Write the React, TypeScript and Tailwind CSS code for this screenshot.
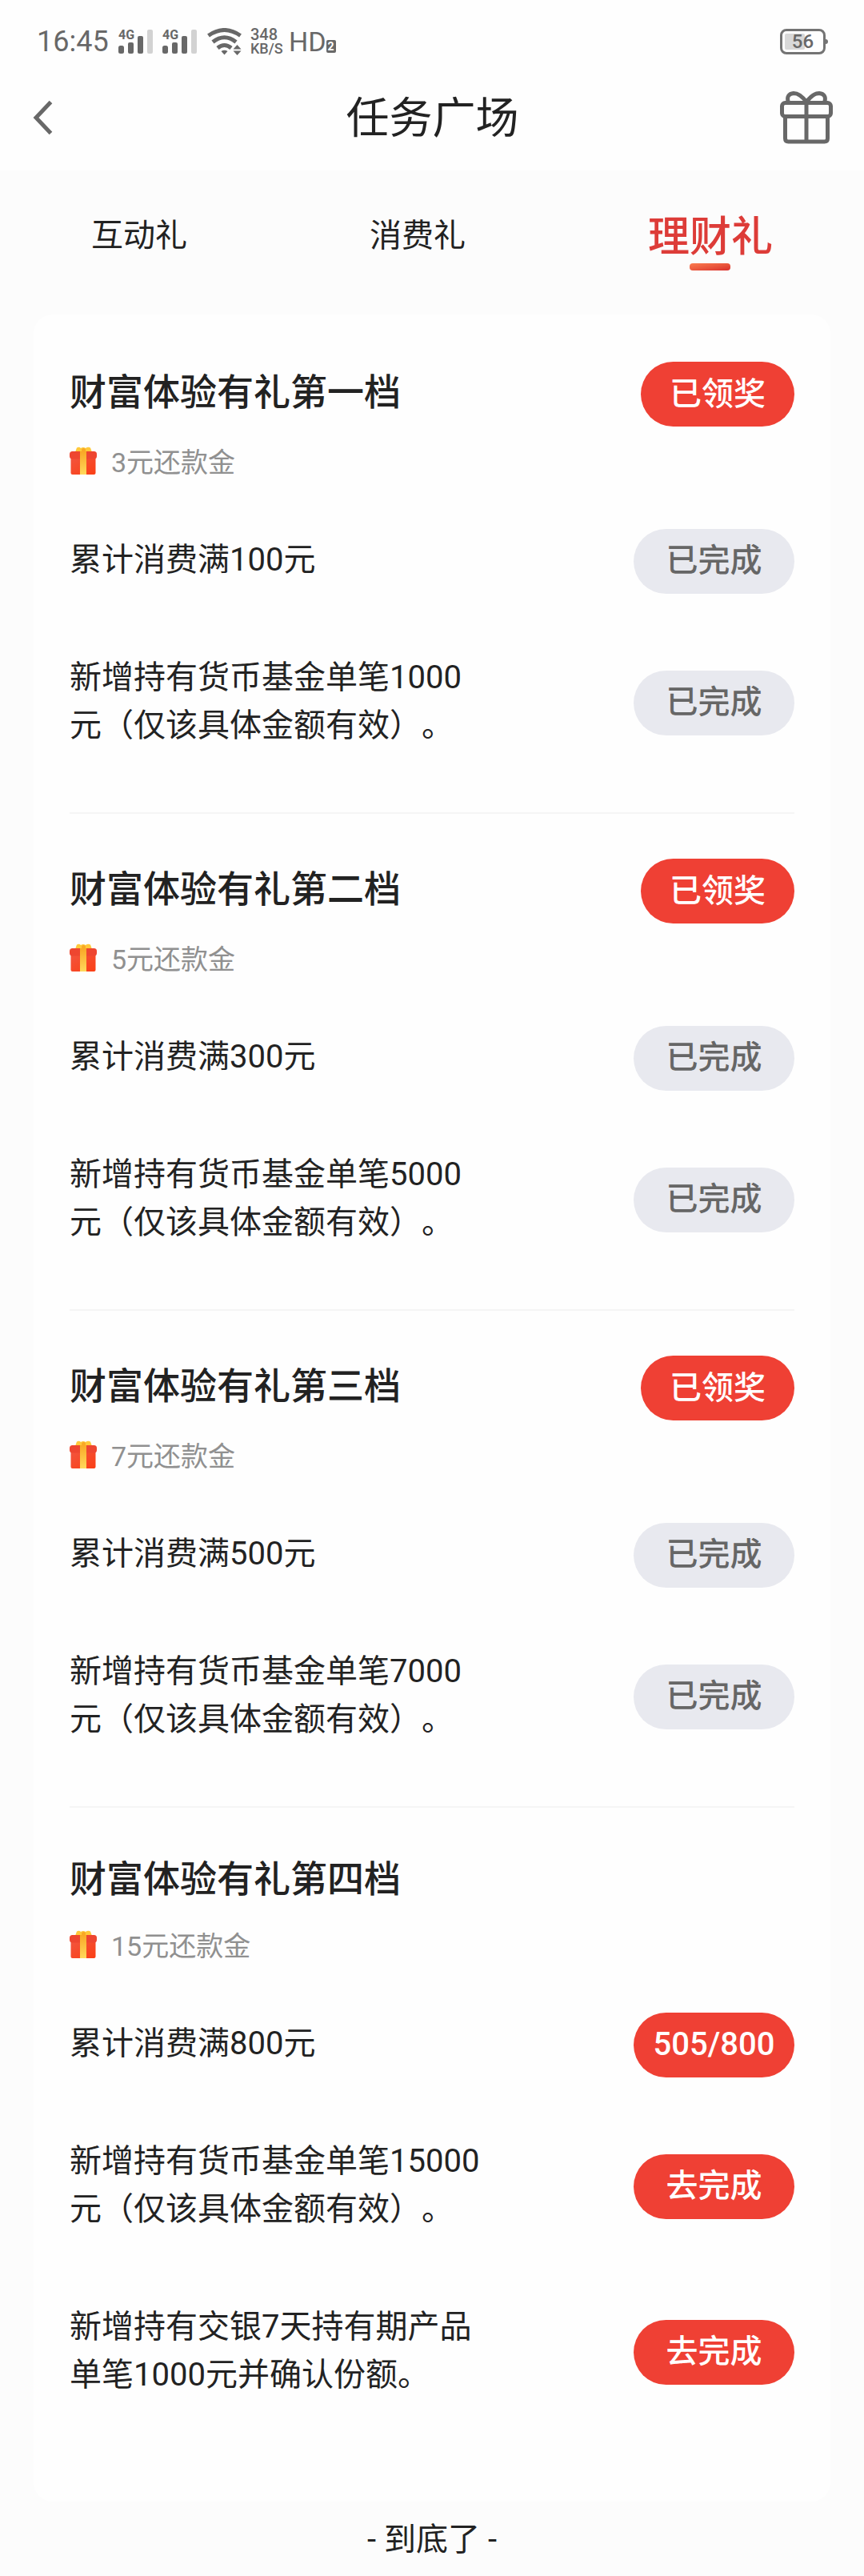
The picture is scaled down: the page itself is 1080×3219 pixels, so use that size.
'use client';

import { useState } from 'react';
import clsx from 'clsx';

type Status = 'done' | 'todo';

type Task = {
  text: string;
  action: string;
  status: Status;
};

type Level = {
  title: string;
  reward: string;
  claimed?: boolean;
  tasks: Task[];
};

const TABS = ['互动礼', '消费礼', '理财礼'];

const LEVELS: Level[] = [
  {
    title: '财富体验有礼第一档',
    reward: '3元还款金',
    claimed: true,
    tasks: [
      { text: '累计消费满100元', action: '已完成', status: 'done' },
      { text: '新增持有货币基金单笔1000元（仅该具体金额有效）。', action: '已完成', status: 'done' },
    ],
  },
  {
    title: '财富体验有礼第二档',
    reward: '5元还款金',
    claimed: true,
    tasks: [
      { text: '累计消费满300元', action: '已完成', status: 'done' },
      { text: '新增持有货币基金单笔5000元（仅该具体金额有效）。', action: '已完成', status: 'done' },
    ],
  },
  {
    title: '财富体验有礼第三档',
    reward: '7元还款金',
    claimed: true,
    tasks: [
      { text: '累计消费满500元', action: '已完成', status: 'done' },
      { text: '新增持有货币基金单笔7000元（仅该具体金额有效）。', action: '已完成', status: 'done' },
    ],
  },
  {
    title: '财富体验有礼第四档',
    reward: '15元还款金',
    tasks: [
      { text: '累计消费满800元', action: '505/800', status: 'todo' },
      { text: '新增持有货币基金单笔15000元（仅该具体金额有效）。', action: '去完成', status: 'todo' },
      { text: '新增持有交银7天持有期产品单笔1000元并确认份额。', action: '去完成', status: 'todo' },
    ],
  },
];

function Signal() {
  return (
    <div className="relative h-8 w-11">
      <span className="absolute left-0 top-0 text-base leading-4 font-bold">4G</span>
      <svg viewBox="0 0 44 32" className="h-8 w-11" fill="#686868">
        <rect x="0" y="21" width="7" height="10" rx="2.5" />
        <rect x="12" y="17" width="7" height="14" rx="2" />
        <rect x="24" y="9" width="7" height="22" rx="2" />
        <rect x="36" y="1" width="7" height="30" rx="2" fill="#d2d2d2" />
      </svg>
    </div>
  );
}

function Wifi() {
  return (
    <svg viewBox="0 0 44 34" className="h-[34px] w-11" fill="none" stroke="#686868" strokeWidth="5">
      <path d="M1.5 9.5 Q21.5 -4.5 41.5 9.5" />
      <path d="M7 17.5 Q21.5 6 36 17.5" />
      <path d="M13 25 Q21.5 18 30 25" />
      <path d="M17.5 29 Q21.5 26.5 25.5 29 L21.5 33.5 Z" fill="#686868" stroke="none" />
      <path d="M32.5 26.5 L37.5 21 L42.5 26.5 Z M32.5 28.5 L37.5 34 L42.5 28.5 Z" fill="#686868" stroke="none" />
    </svg>
  );
}

function StatusBar() {
  return (
    <div className="flex h-20 items-center justify-between pt-6 pl-[46px] pr-[45px] text-[#686868]">
      <div className="flex items-center">
        <span className="w-[102px] text-4xl leading-8">16:45</span>
        <div className="flex gap-[11px]">
          <Signal />
          <Signal />
        </div>
        <div className="ml-3">
          <Wifi />
        </div>
        <div className="ml-2.5 flex w-12 flex-col font-medium">
          <span className="text-xl leading-[18px]">348</span>
          <span className="text-lg leading-[18px]">KB/S</span>
        </div>
        <span className="text-[34px] leading-8">HD</span>
        <span className="mt-3 h-4 w-3 rounded-xs bg-[#686868] text-center text-sm leading-4 font-bold text-white">2</span>
      </div>

      {/* battery */}
      <div className="flex items-center">
        <div className="relative flex h-8 w-[57px] items-center justify-center rounded-lg border-3 border-[#747474]">
          <div className="absolute left-[3px] top-[3px] h-5 w-[25px] rounded-xs bg-[#d8d8d8]" />
          <span className="relative text-2xl leading-6 font-medium">56</span>
        </div>
        <div className="h-1.5 w-[3px] rounded-r-full bg-[#747474]" />
      </div>
    </div>
  );
}

function GiftOutline() {
  return (
    <svg viewBox="0 0 66 66" className="size-[66px]" fill="none" stroke="#686868" strokeWidth="5">
      <rect x="2.5" y="14.5" width="61" height="17" rx="4" />
      <path d="M6.5 32 V59 Q6.5 63 10.5 63 H55.5 Q59.5 63 59.5 59 V32" />
      <path d="M33 13 V63" />
      <path d="M10.5 14 C8 7 11 3 17 2.5 C23 2.5 29 8 33 13.5 C37 8 43 2.5 49 2.5 C55 3 58 7 55.5 14" />
    </svg>
  );
}

function GiftIcon() {
  return (
    <svg viewBox="0 0 34 36" className="mb-1 h-9 w-[34px]">
      <defs>
        <linearGradient id="box" x1="0" y1="0" x2="1" y2="1">
          <stop offset="0" stopColor="#f2553f" />
          <stop offset="1" stopColor="#fb3f14" />
        </linearGradient>
        <linearGradient id="ribbon" x1="0" y1="0" x2="0" y2="1">
          <stop offset="0" stopColor="#f9a825" />
          <stop offset="1" stopColor="#ffd95c" />
        </linearGradient>
      </defs>
      <path d="M7 7 L9 1.5 Q12 0 14 2 Q17 0 20 2 Q23 0 26 1.5 L28 7 Z" fill="#ffc93a" />
      <circle cx="17.5" cy="4.5" r="2.5" fill="#f9a825" />
      <rect x="1.5" y="13" width="31" height="22" rx="2" fill="url(#box)" />
      <rect x="0" y="6" width="34" height="9.5" rx="3.5" fill="#ee4630" />
      <rect x="13" y="6" width="8" height="29" fill="url(#ribbon)" />
    </svg>
  );
}

function LevelSection({ level }: { level: Level }) {
  return (
    <section className="border-b-2 border-[#f5f5f5] pt-14 pb-[76px] last:border-b-0">
      <div className="flex items-center justify-between">
        <h2 className="pb-1.5 text-[46px] leading-[66px] font-medium">{level.title}</h2>
        {level.claimed && (
          <button className="h-[81px] w-48 rounded-full bg-[#ef4034] text-[40px] font-medium text-white">
            已领奖
          </button>
        )}
      </div>

      <div className="mt-5 flex h-[50px] items-center gap-[18px]">
        <GiftIcon />
        <span className="text-[34px] leading-[50px] text-[#909090]">{level.reward}</span>
      </div>

      <ul className="mt-[67px] flex flex-col gap-[85px]">
        {level.tasks.map((task) => (
          <li key={task.text} className="flex items-center justify-between">
            <p className="max-w-[520px] pb-0.5 text-[40px] leading-[60px] [text-spacing-trim:space-all]">
              {task.text}
            </p>
            <button
              className={clsx(
                '-my-2.5 h-[81px] w-[201px] shrink-0 rounded-full text-[40px] font-medium',
                task.status === 'done' ? 'bg-[#e8e9ef] text-[#666666]' : 'bg-[#ef4034] text-white'
              )}
            >
              {task.action}
            </button>
          </li>
        ))}
      </ul>
    </section>
  );
}

export default function App() {
  const [tab, setTab] = useState('理财礼');

  return (
    <div className="min-h-screen bg-[#fcfcfc] text-[#222222] [font-family:Roboto,'Noto_Sans_CJK_SC',sans-serif]">
      <div className="bg-[#fefefe]">
        <StatusBar />
        <header className="flex h-[133px] items-center justify-between pl-10 pr-[39px]">
          <button aria-label="返回" className="w-[66px]">
            <svg viewBox="0 0 26 44" className="h-11 w-[26px]" fill="none" stroke="#686868" strokeWidth="5">
              <path d="M23.5 2.5 L5 22 L23.5 41.5" />
            </svg>
          </button>
          <h1 className="pt-1 text-[54px] leading-[72px]">任务广场</h1>
          <button aria-label="礼物">
            <GiftOutline />
          </button>
        </header>
      </div>

      {/* tabs */}
      <nav className="flex items-start justify-between px-[114px] pt-[52px] pb-[53px]">
        {TABS.map((name) => (
          <button
            key={name}
            onClick={() => setTab(name)}
            className={clsx(
              'flex h-[75px] flex-col items-center',
              tab === name ? 'text-[52px] leading-[64px] font-medium text-[#dd3c38]' : 'text-[40px] leading-[60px]'
            )}
          >
            {name}
            {tab === name && (
              <span className="h-[9px] w-[51px] rounded-sm bg-linear-to-br from-[#fb7c50] to-[#d92b2b]" />
            )}
          </button>
        ))}
      </nav>

      <main className="mx-[42px] rounded-[24px] bg-[#fefefe] px-[45px] pt-[3px] pb-[50px]">
        {LEVELS.map((level) => (
          <LevelSection key={level.title} level={level} />
        ))}
      </main>

      <footer className="pt-[18px] pb-3 text-center text-[40px] leading-[60px]">- 到底了 -</footer>
    </div>
  );
}
